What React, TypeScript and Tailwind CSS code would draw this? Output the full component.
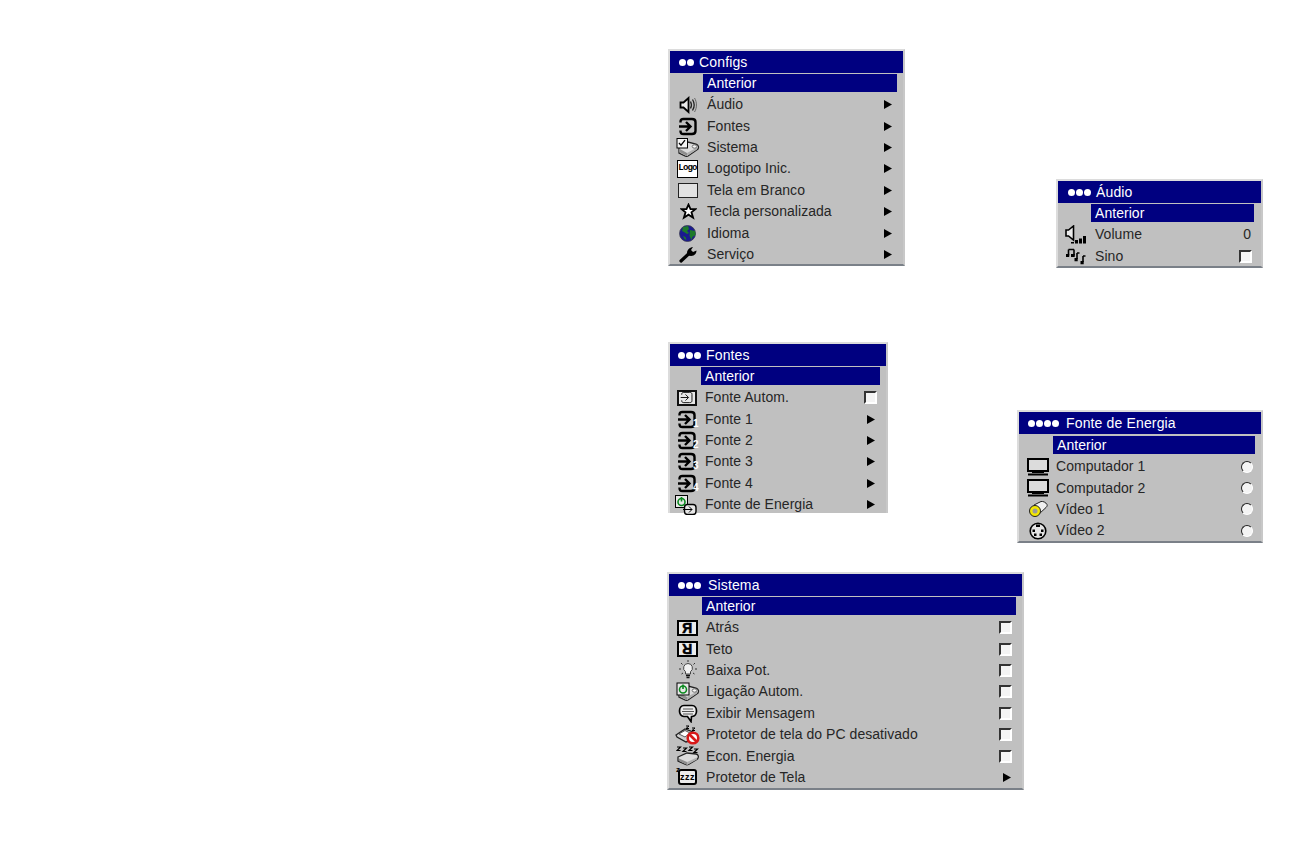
import React from 'react';

const FONT = "font-['Liberation_Sans',Arial,sans-serif]";

const Speaker = () => (
  <svg width="18" height="18" viewBox="0 0 18 18">
    <path d="M1.500 6.500h3l5-4.500v14l-5-4.500h-3z" fill="#ececec" stroke="#000" strokeWidth="1.800" />
    <path d="M11.500 5.500c1.200 2.200 1.200 4.800 0 7M13.500 3.500c2 3.200 2 7.800 0 11" fill="none" stroke="#222" strokeWidth="1.300" />
    <path d="M15.500 2c2.600 4 2.600 10 0 14" fill="none" stroke="#666" />
  </svg>
);

const SourceGlyph = ({ thin = false }: { thin?: boolean }) => (
  <g fill="none" stroke="#000" strokeWidth={thin ? 1.3 : 2.4}>
    <path d="M2.500 5.500V5C2.500 3 3.500 2 5.500 2h8.500c2.500 0 3.500 1 3.500 3v9c0 2-1 3-3.500 3H5.500c-2 0-3-1-3-3v-.5" />
    <path d="M1 9.500h11M8 5l4.500 4.500L8 14" />
  </g>
);

const Source = ({ digit }: { digit?: string }) => (
  <span className="relative inline-flex w-[19px] h-[19px] items-center">
    <svg width="19" height="19" viewBox="0 0 19 19"><SourceGlyph /></svg>
    {digit && (
      <span className="absolute left-[16px] top-[9px] text-[10px] leading-[10px] font-bold text-white">{digit}</span>
    )}
  </span>
);

const AutoSource = () => (
  <span className="inline-flex w-[20px] h-[16px] items-center justify-center bg-[#e8e8e8] border-2 border-[#111]">
    <svg width="13" height="13" viewBox="0 0 19 19"><SourceGlyph thin /></svg>
  </span>
);

const Body = () => (
  <g>
    <path d="M3 9l9-5 8 2c2.500 1 3 3 2 5l-10 7c-1 .5-2 .5-3 0l-6-3z" fill="#dcdcdc" stroke="#222" strokeWidth="1.300" />
    <path d="M3 10.500l8 4.500v3l-8-4z" fill="#8e8e8e" />
    <path d="M11 15l10-5.500v2L11 18z" fill="#b0b0b0" />
    <ellipse cx="18.500" cy="8.500" rx="2.300" ry="1.700" fill="#f6f6f6" stroke="#555" strokeWidth="0.800" />
  </g>
);

const SystemIcon = () => (
  <svg width="24" height="19" viewBox="0 0 24 19">
    <Body />
    <rect x="1" y="0.500" width="10.500" height="9.500" fill="#f4f4f4" stroke="#000" />
    <path d="M3 5l2 2.200 4-5" fill="none" stroke="#000" strokeWidth="1.300" />
  </svg>
);

const PowerMark = ({ x = 1, y = 1 }: { x?: number; y?: number }) => (
  <g transform={`translate(${x} ${y})`}>
    <rect x="0" y="0" width="12" height="12" fill="#e8e8e8" stroke="#000" />
    <circle cx="6" cy="6.500" r="3.500" fill="none" stroke="#0a8a1e" strokeWidth="1.600" />
    <path d="M6 1.500v4.500" stroke="#0a8a1e" strokeWidth="1.600" />
  </g>
);

const PowerProjector = () => (
  <svg width="24" height="19" viewBox="0 0 24 19">
    <Body />
    <PowerMark />
  </svg>
);

const NoSaver = () => (
  <svg width="25" height="20" viewBox="0 0 25 20">
    <path d="M1 10l9-6 8 3-3 9-4 1-9-5z" fill="#d0d0d0" stroke="#222" strokeWidth="1.300" />
    <path d="M4 9l6-3.500 5 2.500-5 4z" fill="#fff" stroke="#333" strokeWidth="0.800" />
    <path d="M11 1h3l-3 2.500h3M17 3h3l-3 2.500h3" fill="none" stroke="#000" />
    <circle cx="18" cy="13" r="5.300" fill="#fff" stroke="#d81818" strokeWidth="2.600" />
    <path d="M14.500 9.500l7 7" stroke="#d81818" strokeWidth="2.600" />
  </svg>
);

const SleepProjector = () => (
  <svg width="24" height="20" viewBox="0 0 24 20">
    <path d="M2 11l9-4 9 1c2.500 .5 3 3 1.500 5l-9 5.500c-1 .5-2 .5-3 0L2 15z" fill="#dcdcdc" stroke="#222" strokeWidth="1.300" />
    <path d="M3 12.500l8 3.500v3l-8-4z" fill="#8e8e8e" />
    <path d="M11 16l10-4.500v2L11 19z" fill="#b0b0b0" />
    <path d="M1 1h3.500L1 4.500h3.500M7 2h3.500L7 5.500h3.500M13 1h3.500L13 4.500h3.500M18 3h3.500L18 6.500h3.500" fill="none" stroke="#000" strokeWidth="1.200" />
  </svg>
);

const LogoBox = () => (
  <span className="inline-flex w-[21px] h-[18px] items-center justify-center bg-white border border-black text-[9px] font-bold font-['Liberation_Mono',monospace] tracking-[-0.8px] text-black">
    Logo
  </span>
);

const BlankBox = () => <span className="block w-[20px] h-[15px] bg-[#e2e2e2] border border-[#222]" />;

const Star = () => (
  <svg width="17" height="17" viewBox="0 0 16 16" className="ml-[1px]">
    <path d="M8 1.500l1.900 4.300h4.600l-3.700 3 1.500 5L8 11l-4.300 2.800 1.500-5-3.700-3h4.600z" fill="#fff" stroke="#000" strokeWidth="1.700" />
  </svg>
);

const Globe = () => (
  <svg width="17" height="17" viewBox="0 0 17 17">
    <circle cx="8.500" cy="8.500" r="8" fill="#1a1a90" stroke="#3a3a50" strokeWidth="0.800" />
    <path d="M4 2l5-1 1 3-2 2 2 2-2 1-3-2-2-1zM11 5l5 1 .5 4-3 2-1 3-2-4zM4 11l2.500 1 1 3-2-1z" fill="#1c7a2a" />
  </svg>
);

const Wrench = () => (
  <svg width="18" height="18" viewBox="0 0 18 18">
    <path d="M2 16L10 8.500" stroke="#000" strokeWidth="3.200" strokeLinecap="round" />
    <path d="M8.500 10c-1.500-3.500 1-7.500 5.500-8l-2 3 2 2 3.500-1.500c0 4.500-4.500 7-9 4.500z" fill="#000" />
  </svg>
);

const VolumeIcon = () => (
  <svg width="22" height="19" viewBox="0 0 22 19" className="ml-[1px]">
    <path d="M1 5h2.500l5-4v14l-5-4H1z" fill="#ececec" stroke="#000" strokeWidth="1.600" />
    <path d="M6 18.500h3v-1.500H6zM10 18.500h3V15h-3zM14 18.500h3v-5h-3zM18 18.500h3V11h-3z" fill="#000" />
  </svg>
);

const Notes = () => (
  <svg width="20" height="17" viewBox="0 0 20 17" className="ml-[1px]">
    <path d="M2.500 1.500h5.500M2.500 1.500v6M8 1.500v6M11 5h2.500M11 5v6M17 8h2.500M17 8v6" fill="none" stroke="#000" strokeWidth="1.600" />
    <path d="M0 6h3.200v3H0zM5 6h3.700v3H5zM8.500 10h3.200v3.200H8.500zM14.500 13h3.200v3.200h-3.200z" fill="#000" />
  </svg>
);

const PowerSource = () => (
  <svg width="23" height="20" viewBox="0 0 23 20">
    <PowerMark x={0.500} y={0.500} />
    <rect x="9.500" y="9.500" width="11.500" height="10" rx="3" fill="#e8e8e8" stroke="#000" strokeWidth="1.400" />
    <path d="M8 14.500h9M14 11.500l3 3-3 3" fill="none" stroke="#000" />
  </svg>
);

const Computer = () => (
  <svg width="22" height="18" viewBox="0 0 22 18">
    <rect x="1" y="1" width="20" height="12" fill="#dcdcdc" stroke="#000" strokeWidth="2" />
    <path d="M5 14.500h12" stroke="#000" strokeWidth="1" />
    <path d="M1 16.500h20" stroke="#000" strokeWidth="2" />
  </svg>
);

const VideoPlug = () => (
  <svg width="20" height="17" viewBox="0 0 20 17">
    <path d="M6 4l7-3.500c2-.5 5 1 6 3 .5 1 0 2-1 3L11 13z" fill="#f0f0f0" stroke="#222" />
    <circle cx="7" cy="10" r="5.500" fill="#f4e800" stroke="#222" />
    <circle cx="7" cy="10" r="2.500" fill="#9a9a9a" />
  </svg>
);

const SVideo = () => (
  <svg width="18" height="18" viewBox="0 0 18 18">
    <circle cx="9" cy="9" r="7.800" fill="#e4e4e4" stroke="#000" strokeWidth="1.600" />
    <rect x="7" y="2.500" width="4" height="2.500" fill="#000" />
    <path d="M3.500 7.500h2.500v2.500H3.500zM12 7.500h2.500v2.500H12zM5 11.500h2.500V14H5zM10.500 11.500H13V14h-2.500z" fill="#000" />
  </svg>
);

const LetterBox = ({ flip = false }: { flip?: boolean }) => (
  <span className="inline-flex w-[21px] h-[16px] items-center justify-center bg-[#ececec] border-2 border-black">
    <span className={`text-[14px] leading-[12px] font-bold text-black [-webkit-text-stroke:0.5px_#000] ${flip ? 'rotate-180' : '-scale-x-100'}`}>R</span>
  </span>
);

const Bulb = () => (
  <svg width="20" height="20" viewBox="0 0 20 20">
    <path d="M10 3.500a4.500 4.500 0 0 0-2.500 8.200V14h5v-2.300A4.500 4.500 0 0 0 10 3.500z" fill="#f2f2f2" stroke="#444" />
    <path d="M8 15.500h4M8.500 17.500h3" stroke="#111" strokeWidth="1.500" />
    <path d="M10 0v2M3 3l1.500 1.500M17 3l-1.500 1.500M1 9h2M17 9h2M3.500 14l1.500-1M16.500 14L15 13" stroke="#333" />
  </svg>
);

const Bubble = () => (
  <svg width="20" height="19" viewBox="0 0 20 19">
    <path d="M6 1.500h8c6 0 6 11 0 11h-.5l-.5 5-3.500-5H6c-6 0-6-11 0-11z" fill="#ececec" stroke="#000" strokeWidth="1.700" />
    <path d="M5 5h10M4 7.500h12M5 10h10" stroke="#555" />
  </svg>
);

const SaverBox = () => (
  <span className="relative inline-flex w-[19px] h-[16px] items-center justify-center bg-[#ececec] border-2 border-black rounded-[3px] text-[9px] leading-[9px] font-bold text-black tracking-[0.5px]">
    <span className="absolute left-[-4px] top-[-6px] text-[8px]">z</span>
    zzz
  </span>
);

const Arrow = ({ className = '' }: { className?: string }) => (
  <svg width="8" height="9" viewBox="0 0 8 9" className={`block ${className}`}>
    <path d="M0 0l8 4.500L0 9z" fill="#000" />
  </svg>
);

const Check = () => <span className="block w-[13px] h-[13px] bg-[#f4f4f4] border-2 border-t-[#333] border-l-[#333] border-r-white border-b-white" />;

const Radio = () => (
  <span className="block w-[12px] h-[12px] rounded-full bg-[#f4f4f4] border border-t-[#222] border-l-[#222] border-r-white border-b-white" />
);

interface Row {
  icon: React.ReactNode;
  label: string;
  end: React.ReactNode;
}

const Dots = ({ count }: { count: number }) => (
  <span className="flex gap-[1px]">
    {Array.from({ length: count }).map((_, i) => (
      <span key={i} className="block w-[7px] h-[7px] rounded-full bg-white" />
    ))}
  </span>
);

interface PanelProps {
  dots: number;
  title: string;
  rows: Row[];
  className: string;
  titlePad: string;
  titleGap: string;
  anterior: string;
  iconCol: string;
  endPad: string;
  flat?: boolean;
}

const Panel = ({ dots, title, rows, className, titlePad, titleGap, anterior, iconCol, endPad, flat }: PanelProps) => (
  <div className={`${className} bg-[#c0c0c0] border-2 border-t-[#dcdcdc] border-l-[#dcdcdc] border-r-[#c8c8c8] ${flat ? 'border-b-0' : 'border-b-[#7a8088]'} text-[14px] text-[#262626]`}>
    <div className={`flex items-center h-[22px] bg-[#000080] text-white ${titlePad}`}>
      <Dots count={dots} />
      <span className={`${titleGap} tracking-[0.15px]`}>{title}</span>
    </div>
    <div className={`h-[18px] flex items-center bg-[#000080] text-white pl-[4px] ${anterior}`}>
      <span className="tracking-[0.05px]">Anterior</span>
    </div>
    <div className="pt-[2px]">
      {rows.map((row) => (
        <div key={row.label} className={`flex items-center h-[21.4px] ${endPad}`}>
          <span className={`flex shrink-0 items-center justify-center ${iconCol}`}>{row.icon}</span>
          <span className="ml-[4px] flex-1 tracking-[0.05px] whitespace-nowrap">{row.label}</span>
          {row.end}
        </div>
      ))}
    </div>
  </div>
);

const configRows: Row[] = [
  { icon: <Speaker />, label: 'Áudio', end: <Arrow /> },
  { icon: <Source />, label: 'Fontes', end: <Arrow /> },
  { icon: <SystemIcon />, label: 'Sistema', end: <Arrow /> },
  { icon: <LogoBox />, label: 'Logotipo Inic.', end: <Arrow /> },
  { icon: <BlankBox />, label: 'Tela em Branco', end: <Arrow /> },
  { icon: <Star />, label: 'Tecla personalizada', end: <Arrow /> },
  { icon: <Globe />, label: 'Idioma', end: <Arrow /> },
  { icon: <Wrench />, label: 'Serviço', end: <Arrow /> },
];

const audioRows: Row[] = [
  { icon: <VolumeIcon />, label: 'Volume', end: <span className="pr-[1px]">0</span> },
  { icon: <Notes />, label: 'Sino', end: <Check /> },
];

const sourceRows: Row[] = [
  { icon: <AutoSource />, label: 'Fonte Autom.', end: <Check /> },
  { icon: <Source digit="1" />, label: 'Fonte 1', end: <Arrow className="mr-[2px]" /> },
  { icon: <Source digit="2" />, label: 'Fonte 2', end: <Arrow className="mr-[2px]" /> },
  { icon: <Source digit="3" />, label: 'Fonte 3', end: <Arrow className="mr-[2px]" /> },
  { icon: <Source digit="4" />, label: 'Fonte 4', end: <Arrow className="mr-[2px]" /> },
  { icon: <PowerSource />, label: 'Fonte de Energia', end: <Arrow className="mr-[2px]" /> },
];

const powerRows: Row[] = [
  { icon: <Computer />, label: 'Computador 1', end: <Radio /> },
  { icon: <Computer />, label: 'Computador 2', end: <Radio /> },
  { icon: <VideoPlug />, label: 'Vídeo 1', end: <Radio /> },
  { icon: <SVideo />, label: 'Vídeo 2', end: <Radio /> },
];

const systemRows: Row[] = [
  { icon: <LetterBox />, label: 'Atrás', end: <Check /> },
  { icon: <LetterBox flip />, label: 'Teto', end: <Check /> },
  { icon: <Bulb />, label: 'Baixa Pot.', end: <Check /> },
  { icon: <PowerProjector />, label: 'Ligação Autom.', end: <Check /> },
  { icon: <Bubble />, label: 'Exibir Mensagem', end: <Check /> },
  { icon: <NoSaver />, label: 'Protetor de tela do PC desativado', end: <Check /> },
  { icon: <SleepProjector />, label: 'Econ. Energia', end: <Check /> },
  { icon: <SaverBox />, label: 'Protetor de Tela', end: <Arrow className="mr-[1px]" /> },
];

export default function App() {
  return (
    <div className={`${FONT} w-[1297px] h-[865px] bg-white overflow-hidden pt-[49px] pl-[668px] pr-[34px]`}>
      <div className="flex items-start justify-between">
        <Panel
          dots={2}
          title="Configs"
          rows={configRows}
          className="w-[237px] h-[217px]"
          titlePad="pl-[9px]"
          titleGap="ml-[5px]"
          anterior="mt-[1px] ml-[33px] mr-[6px]"
          iconCol="w-[33px] pl-[2px]"
          endPad="pr-[11px]"
        />
        <Panel
          dots={3}
          title="Áudio"
          rows={audioRows}
          className="mt-[130px] w-[207px] h-[89px]"
          titlePad="pl-[10px]"
          titleGap="ml-[5px]"
          anterior="mt-[1px] ml-[33px] mr-[7px]"
          iconCol="w-[33px] pl-[2px]"
          endPad="pr-[9px]"
        />
      </div>
      <div className="mt-[-2px] flex items-start justify-between">
        <Panel
          dots={3}
          title="Fontes"
          rows={sourceRows}
          className="mt-[76px] w-[220px] h-[171px]"
          titlePad="pl-[8px]"
          titleGap="ml-[5px]"
          anterior="mt-[1px] ml-[31px] mr-[6px]"
          iconCol="w-[31px] pl-[2px]"
          endPad="pr-[9px]"
          flat
        />
        <Panel
          dots={4}
          title="Fonte de Energia"
          rows={powerRows}
          className="mt-[144px] w-[246px] h-[133px]"
          titlePad="pl-[9px] pt-[1px]"
          titleGap="ml-[7px]"
          anterior="mt-[2px] ml-[34px] mr-[6px]"
          iconCol="w-[33px] pl-[5px]"
          endPad="pr-[8px]"
        />
      </div>
      <Panel
        dots={3}
        title="Sistema"
        rows={systemRows}
        className="mt-[29px] ml-[-1px] w-[357px] h-[218px]"
        titlePad="pl-[9px] pt-[1px]"
        titleGap="ml-[7px]"
        anterior="mt-[1px] ml-[33px] mr-[6px]"
        iconCol="w-[33px] pl-[4px]"
        endPad="pr-[10px]"
      />
    </div>
  );
}
